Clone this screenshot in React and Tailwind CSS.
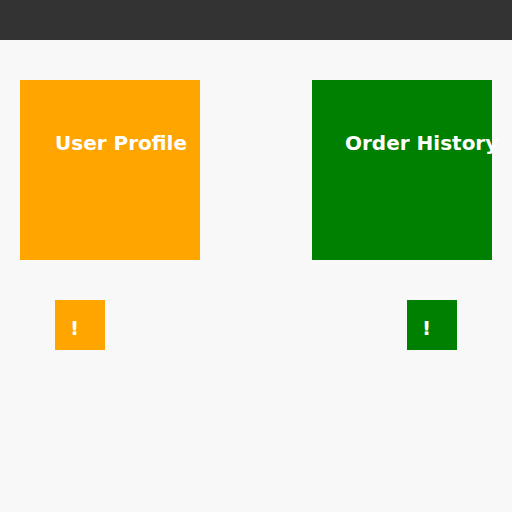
export default function App() {
  return (
    <div className="min-h-[512px] w-[512px] bg-[#f8f8f8] font-['DejaVu_Sans',sans-serif] overflow-hidden">
      <div className="h-10 bg-[#333333]" />
      <div className="flex justify-between px-5 pt-10">
        <div className="flex flex-col items-start">
          <div className="w-[180px] h-[180px] bg-[#ffa500] pl-[35px] pt-[48px]">
            <div className="text-white font-bold text-[20px] leading-[30px] whitespace-nowrap">User Profile</div>
          </div>
          <div className="mt-10 ml-[35px] w-[50px] h-[50px] bg-[#ffa500] pl-[15px] pt-[13px]">
            <div className="text-white font-bold text-[20px] leading-[30px]">!</div>
          </div>
        </div>
        <div className="flex flex-col items-end">
          <div className="w-[180px] h-[180px] bg-[#008000] pl-[33px] pt-[48px]">
            <div className="text-white font-bold text-[20px] leading-[30px] whitespace-nowrap">Order History</div>
          </div>
          <div className="mt-10 mr-[35px] w-[50px] h-[50px] bg-[#008000] pl-[15px] pt-[13px]">
            <div className="text-white font-bold text-[20px] leading-[30px]">!</div>
          </div>
        </div>
      </div>
    </div>
  );
}
